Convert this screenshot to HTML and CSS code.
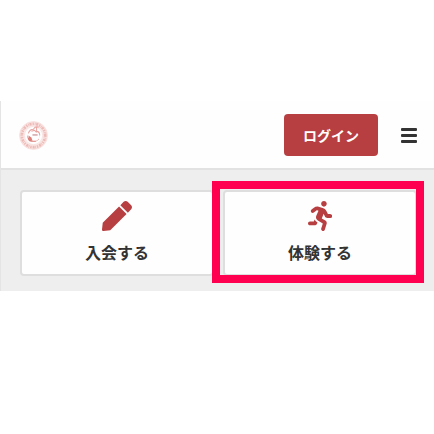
FILE: index.html
```html
<!DOCTYPE html>
<html lang="ja">
<head>
    <meta charset="utf-8">
    <meta name="viewport" content="width=device-width, initial-scale=1">
    <title>体験する</title>
    <link rel="stylesheet" href="styles.css">
</head>
<body>
<div class="page">
    <header class="header">
        <a href="#" class="logo" aria-label="Home">
            <svg viewBox="0 0 28 28" fill="none">
                <circle class="logo-band" cx="14" cy="14" r="11.3"></circle>
                <circle class="logo-marks" cx="14" cy="14" r="11.3"></circle>
                <circle class="logo-edge" cx="14" cy="14" r="13.5"></circle>
                <circle class="logo-edge" cx="14" cy="14" r="8.8"></circle>
                <path class="logo-line" d="M9 12c1-3 3-4 5-4 1-2 3-3 5-2M17 6v4c2 0 3 2 3 4M12 10l3-1 2 2"></path>
                <path class="logo-dark" d="M13 13.5h5"></path>
                <path class="logo-fill" d="M8 13c1 4 3 5 5 6h4c2-1 3-3 3-5l-1 4-3 2h-4c-3 0-4-3-4-7z"></path>
                <path class="logo-fill" d="M9 14l3 2 1 3-3-1z"></path>
            </svg>
        </a>
        <button type="button" class="login-button">ログイン</button>
        <button type="button" class="menu-button" aria-label="Menu">
            <span class="menu-bar"></span>
            <span class="menu-bar"></span>
            <span class="menu-bar"></span>
        </button>
    </header>

    <nav class="actions">
        <a href="#" class="action-card">
            <svg class="action-icon" viewBox="0 0 512 512">
                <path d="M290.74 93.24l128.02 128.02-277.99 277.99-114.14 12.6C11.35 513.54-1.56 500.62.14 485.34l12.7-114.22 277.9-277.88zm207.2-19.06l-60.11-60.11c-18.75-18.75-49.16-18.75-67.92 0l-56.55 56.55 128.02 128.02 56.55-56.55c18.75-18.76 18.75-49.16 0-67.91z"></path>
            </svg>
            <span class="action-label">入会する</span>
        </a>
        <a href="#" class="action-card highlighted">
            <svg class="action-icon" viewBox="0 0 416 512">
                <path d="M272 96c26.51 0 48-21.49 48-48S298.51 0 272 0s-48 21.49-48 48 21.49 48 48 48zM113.69 317.47l-14.8 34.52H32c-17.67 0-32 14.33-32 32s14.33 32 32 32h77.45c19.25 0 36.58-11.44 44.11-29.09l8.79-20.52-10.67-6.3c-17.32-10.23-30.06-25.37-37.99-42.61zM384 223.99h-44.03l-26.06-53.25c-12.5-25.55-35.45-44.23-61.78-50.94l-71.08-21.14c-28.3-6.8-57.77-.55-80.84 17.14l-39.67 30.41c-14.03 10.75-16.69 30.83-5.94 44.86s30.84 16.69 44.86 5.94l39.69-30.41c7.67-5.89 17.44-8 25.27-6.14l14.7 4.37-37.46 87.39c-12.62 29.48-1.31 64.01 26.3 80.31l84.98 50.17-27.47 87.73c-5.28 16.86 4.11 34.82 20.97 40.09 3.19 1 6.41 1.48 9.58 1.48 13.61 0 26.23-8.77 30.52-22.45l31.64-101.06c5.91-20.77-2.89-43.08-21.64-54.39l-61.24-36.14 31.31-78.28 20.27 41.43c8 16.34 24.92 26.89 43.11 26.89H384c17.67 0 32-14.33 32-32s-14.33-31.99-32-31.99z"></path>
            </svg>
            <span class="action-label">体験する</span>
        </a>
    </nav>
</div>
</body>
</html>
```
FILE: styles.css
```css
* {
    box-sizing: border-box;
}

body {
    display: flex;
    flex-direction: column;
    min-height: 100vh;
    margin: 0;
    padding: 101px 0 143px;
    background-color: #fff;
    color: #333;
    font-family: "Noto Sans CJK JP", sans-serif;
    font-size: 16px;
}

.page {
    border-left: 1px solid #e4e4e4;
}

.header {
    display: flex;
    align-items: center;
    padding: 13px 17px 12px 18px;
    border-bottom: 2px solid #e2e2e2;
    background-color: #fefefe;
}

.logo {
    width: 29px;
    height: 29px;
    margin-right: auto;
}

.logo svg {
    display: block;
    width: 100%;
    height: 100%;
}

.logo-edge {
    stroke: #f3d3d1;
    stroke-width: 0.6;
}

.logo-band {
    stroke: #f9e4e2;
    stroke-width: 4;
}

.logo-marks {
    stroke: #ecbbb8;
    stroke-width: 2.6;
    stroke-dasharray: 1.3 0.9 0.7 0.6 2 1;
}

.logo-line {
    stroke: #e8a39f;
    stroke-width: 1;
}

.logo-dark {
    stroke: #b25f66;
    stroke-width: 0.8;
}

.logo-fill {
    fill: #dc7f79;
}

.login-button {
    padding: 0 19px;
    border: none;
    border-radius: 4px;
    background-color: #b73f42;
    color: #fff;
    font-family: inherit;
    font-size: 14px;
    font-weight: 700;
    line-height: 42px;
    cursor: pointer;
}

.menu-button {
    display: flex;
    flex-direction: column;
    gap: 3px;
    margin-left: 23px;
    padding: 0;
    border: none;
    background: none;
    cursor: pointer;
}

.menu-bar {
    width: 16px;
    height: 3px;
    border-radius: 1px;
    background-color: #333;
}

.actions {
    display: grid;
    grid-template-columns: 1fr 1fr;
    gap: 9px;
    padding: 20px 17px 15px 19px;
    background-color: #eee;
}

.action-card {
    position: relative;
    display: flex;
    flex-direction: column;
    align-items: center;
    gap: 9px;
    padding: 9px 0 10px;
    border: 2px solid #dedede;
    border-radius: 4px;
    background-color: #fefefe;
    color: #333;
    text-decoration: none;
}

.action-icon {
    height: 30px;
    fill: #b73f42;
}

.action-label {
    font-weight: 700;
    line-height: 24px;
}

/* Frame drawn over the card and its surroundings */
.highlighted::after {
    content: "";
    position: absolute;
    inset: -11px -9px -9px -13px;
    border: 8px solid #ff0050;
}
```
